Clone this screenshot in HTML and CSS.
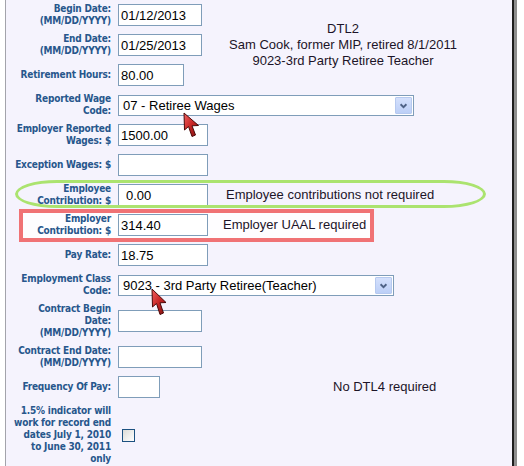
FILE: index.html
```html
<!DOCTYPE html>
<html>
<head>
<meta charset="utf-8">
<link rel="stylesheet" href="styles.css">
</head>
<body>
<div class="panel">
  <div class="mark-green"></div>
  <div class="mark-red"></div>

  <div class="form">
    <div class="lbl">Begin Date:<br>(MM/DD/YYYY)</div>
    <div class="fld"><input class="txt w84" type="text" value="01/12/2013"></div>
    <div class="info">DTL2<br>Sam Cook, former MIP, retired 8/1/2011<br>9023-3rd Party Retiree Teacher</div>

    <div class="lbl">End Date:<br>(MM/DD/YYYY)</div>
    <div class="fld"><input class="txt w84" type="text" value="01/25/2013"></div>

    <div class="lbl">Retirement Hours:</div>
    <div class="fld"><input class="txt w66" type="text" value="80.00"></div>

    <div class="lbl">Reported Wage<br>Code:</div>
    <div class="fld wide">
      <div class="sel w296"><span class="sel-text">07 - Retiree Wages</span><span class="sel-btn"><svg width="17" height="18" viewBox="0 0 17 18"><path d="M5 7.5 L8.5 11 L12 7.5" fill="none" stroke="#4d6185" stroke-width="2.2"/></svg></span></div>
    </div>

    <div class="lbl">Employer Reported<br>Wages: $</div>
    <div class="fld"><input class="txt w90" type="text" value="1500.00"></div>
    <div class="note"></div>

    <div class="lbl">Exception Wages: $</div>
    <div class="fld"><input class="txt w90" type="text" value=""></div>
    <div class="note"></div>

    <div class="lbl">Employee<br>Contribution: $</div>
    <div class="fld"><input class="txt w90 indent" type="text" value="0.00"></div>
    <div class="note n-employee">Employee contributions not required</div>

    <div class="lbl">Employer<br>Contribution: $</div>
    <div class="fld"><input class="txt w90" type="text" value="314.40"></div>
    <div class="note n-employer">Employer UAAL required</div>

    <div class="lbl">Pay Rate:</div>
    <div class="fld"><input class="txt w90" type="text" value="18.75"></div>
    <div class="note"></div>

    <div class="lbl">Employment Class<br>Code:</div>
    <div class="fld wide">
      <div class="sel w276"><span class="sel-text">9023 - 3rd Party Retiree(Teacher)</span><span class="sel-btn"><svg width="17" height="18" viewBox="0 0 17 18"><path d="M5 7.5 L8.5 11 L12 7.5" fill="none" stroke="#4d6185" stroke-width="2.2"/></svg></span></div>
    </div>

    <div class="lbl">Contract Begin<br>Date:<br>(MM/DD/YYYY)</div>
    <div class="fld"><input class="txt w84" type="text" value=""></div>
    <div class="note"></div>

    <div class="lbl">Contract End Date:<br>(MM/DD/YYYY)</div>
    <div class="fld"><input class="txt w84" type="text" value=""></div>
    <div class="note"></div>

    <div class="lbl">Frequency Of Pay:</div>
    <div class="fld"><input class="txt w42" type="text" value=""></div>
    <div class="note n-dtl4">No DTL4 required</div>

    <div class="lbl">1.5% indicator will<br>work for record end<br>dates July 1, 2010<br>to June 30, 2011<br>only</div>
    <div class="fld"><input class="chk" type="checkbox"></div>
    <div class="note"></div>
  </div>

  <svg class="cursor c1" width="18" height="27" viewBox="0 0 18 27">
    <defs>
      <linearGradient id="cg1" x1="0" y1="0" x2="1" y2="1">
        <stop offset="0" stop-color="#f06060"/>
        <stop offset="0.5" stop-color="#c82626"/>
        <stop offset="1" stop-color="#7a1010"/>
      </linearGradient>
    </defs>
    <path d="M1 1 L1.5 18 L5.5 14.5 L9 24.5 L12.5 23 L9 13.8 L15.5 13.5 Z" fill="url(#cg1)" stroke="#4a0808" stroke-width="1" stroke-linejoin="round"/>
  </svg>
  <svg class="cursor c2" width="18" height="29" viewBox="0 0 18 29">
    <defs>
      <linearGradient id="cg2" x1="0" y1="0" x2="1" y2="1">
        <stop offset="0" stop-color="#f06060"/>
        <stop offset="0.5" stop-color="#c82626"/>
        <stop offset="1" stop-color="#7a1010"/>
      </linearGradient>
    </defs>
    <path d="M1 1 L1.5 19 L5.5 15.5 L9 26.5 L12.5 25 L9 14.8 L15 14.5 Z" fill="url(#cg2)" stroke="#4a0808" stroke-width="1" stroke-linejoin="round"/>
  </svg>
</div>
</body>
</html>
```
FILE: styles.css
```css
html, body {
  margin: 0;
  padding: 0;
  background: #ffffff;
}

.panel {
  position: relative;
  margin-left: 5px;
  width: 506px;
  height: 480px;
  background: #f5f3fd;
  border-left: 1px solid #a3a3ab;
  border-right: 2px solid #1e1e1e;
  box-shadow: 3px 0 0 #8e8e8e;
  overflow: hidden;
}

.form {
  position: relative;
  z-index: 1;
  display: grid;
  grid-template-columns: 112px 90px 1fr;
  align-items: center;
}

.lbl {
  font-family: "DejaVu Sans Condensed", "DejaVu Sans", sans-serif;
  font-stretch: condensed;
  font-weight: bold;
  font-size: 10px;
  letter-spacing: -0.2px;
  line-height: 12px;
  color: #27578c;
  text-align: right;
  white-space: nowrap;
  padding: 3px 7px 3px 0;
}

.fld {
  display: flex;
  align-items: center;
  padding: 4px 0;
}

.fld.wide {
  grid-column: 2 / 4;
}

.txt {
  box-sizing: border-box;
  height: 22px;
  margin: 0;
  padding: 0 2px;
  border: 1px solid #7f9db9;
  background: #ffffff;
  font-family: "Liberation Sans", Arial, sans-serif;
  font-size: 13px;
  color: #000000;
  outline: none;
}

.txt.indent { padding-left: 7px; }

.w84 { width: 84px; }
.w66 { width: 66px; }
.w90 { width: 90px; }
.w42 { width: 42px; }
.w296 { width: 296px; }
.w276 { width: 276px; }

.sel {
  box-sizing: border-box;
  height: 21px;
  display: flex;
  align-items: center;
  border: 1px solid #7f9db9;
  background: #ffffff;
}

.sel-text {
  flex: 1;
  padding-left: 4px;
  font-family: "Liberation Sans", Arial, sans-serif;
  font-size: 13px;
  color: #000000;
  white-space: nowrap;
}

.sel-btn {
  box-sizing: border-box;
  width: 17px;
  height: 17px;
  margin-right: 1px;
  display: flex;
  align-items: center;
  justify-content: center;
  background: linear-gradient(#d4e0fc, #bccff7);
  border: 1px solid #b6c9ef;
  border-radius: 1px;
}

.sel-btn svg { display: block; width: 15px; height: 15px; }

.info {
  grid-column: 3;
  grid-row: 1 / 4;
  align-self: center;
  text-align: center;
  padding-right: 34px;
  font-family: "Liberation Sans", Arial, sans-serif;
  font-size: 13px;
  line-height: 16px;
  color: #1c1428;
  white-space: nowrap;
}

.note {
  font-family: "Liberation Sans", Arial, sans-serif;
  font-size: 13px;
  line-height: 16px;
  color: #1c1428;
  white-space: nowrap;
}

.n-employee { padding-left: 18px; }
.n-employer { padding-left: 15px; }
.n-dtl4 { padding-left: 125px; }

.chk {
  appearance: none;
  -webkit-appearance: none;
  box-sizing: border-box;
  width: 13px;
  height: 13px;
  margin: 0 0 0 4px;
  border: 1px solid #1c5180;
  background: linear-gradient(135deg, #dcdcd7, #ffffff);
}

.mark-green {
  position: absolute;
  z-index: 2;
  left: 9px;
  top: 180px;
  width: 471px;
  height: 28px;
  box-sizing: border-box;
  border: 3px solid #abe36f;
  border-radius: 42px / 14px;
  pointer-events: none;
}

.mark-red {
  position: absolute;
  z-index: 0;
  left: 13px;
  top: 209px;
  width: 355px;
  height: 33px;
  box-sizing: border-box;
  border: 4px solid #f07275;
  background: #fefdff;
}

.cursor {
  position: absolute;
  z-index: 3;
}

.c1 { left: 177px; top: 112px; }
.c2 { left: 145px; top: 288px; }
```
